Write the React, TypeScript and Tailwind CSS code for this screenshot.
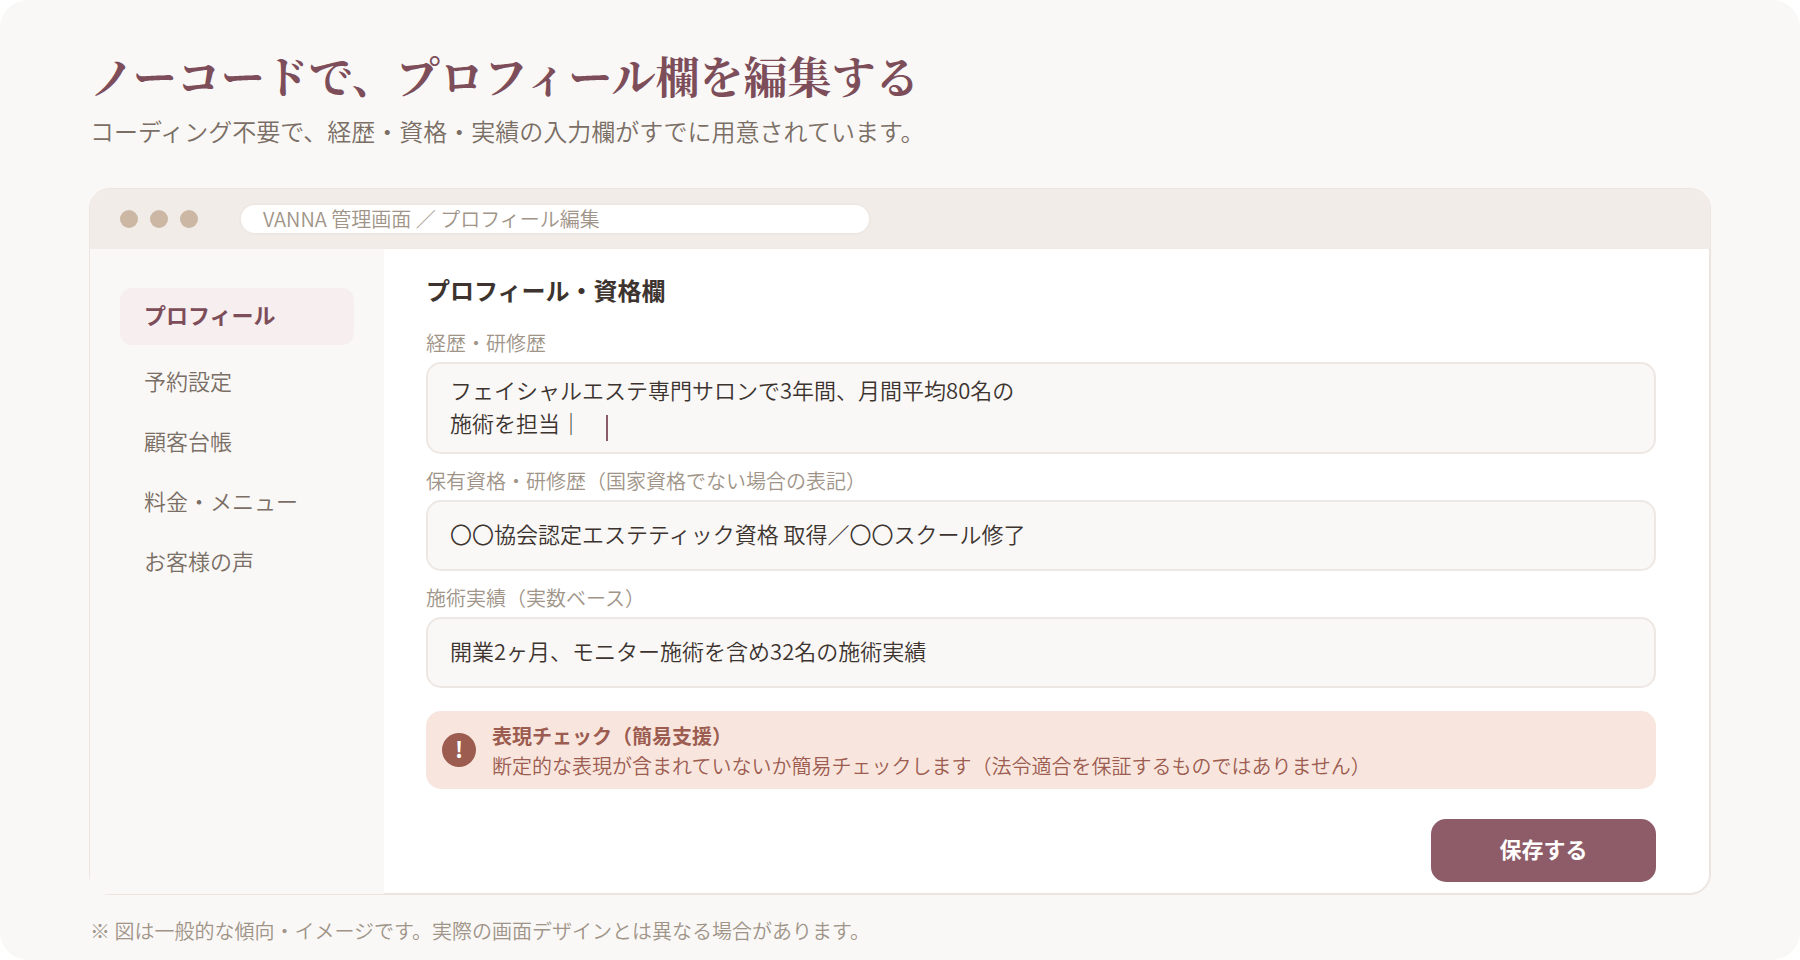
import React, { useState } from 'react';

const NAV_ITEMS = ['プロフィール', '予約設定', '顧客台帳', '料金・メニュー', 'お客様の声'];

const fieldClass =
  'block w-full resize-none rounded-[15px] border-2 border-[#eee8e4] bg-[#f9f8f6] px-[22px] text-[22px] text-[#3d3430] outline-none';

const labelClass = 'block text-[20px] leading-[30px] text-[#a09488]';

function TitleBar() {
  return (
    <div className="flex h-[60px] items-center rounded-t-[20px] bg-[#f2ece8] px-[30px]">
      <div className="flex gap-3">
        <span className="size-[18px] rounded-full bg-[#cbb7a4]" />
        <span className="size-[18px] rounded-full bg-[#cbb7a4]" />
        <span className="size-[18px] rounded-full bg-[#cbb7a4]" />
      </div>
      <div className="ml-[41px] flex h-8 w-[632px] items-center rounded-full border-2 border-[#eee8e4] bg-white px-[22px] text-[20px] text-[#a09488]">
        VANNA 管理画面 ／ プロフィール編集
      </div>
    </div>
  );
}

function Sidebar({ active, onSelect }: { active: string; onSelect: (item: string) => void }) {
  return (
    <nav className="w-[294px] shrink-0 bg-[#f9f8f6] px-[30px] pt-[39px]">
      {NAV_ITEMS.map((item) => (
        <button
          key={item}
          onClick={() => onSelect(item)}
          className={
            item === active
              ? 'mb-[6px] block h-[57px] w-full rounded-xl bg-[#f7eeef] px-6 pb-1 text-left text-[22px] font-bold text-[#7d4e5a]'
              : 'block h-[60px] w-full px-6 pb-0.5 text-left text-[22px] text-[#7a6e65]'
          }
        >
          {item}
        </button>
      ))}
    </nav>
  );
}

function ProfileForm() {
  return (
    <form
      className="min-w-0 flex-1 rounded-br-[20px] border-r border-b border-[#ece4df] bg-white pr-[53px] pb-[11px] pl-[42px]"
      onSubmit={(e) => e.preventDefault()}
    >
      <h2 className="pt-[23px] text-[24px] leading-9 font-bold text-[#3d3430]">プロフィール・資格欄</h2>

      <label htmlFor="career" className={`mt-5 ${labelClass}`}>経歴・研修歴</label>
      <div className="relative mt-1">
        <textarea
          id="career"
          rows={2}
          defaultValue={'フェイシャルエステ専門サロンで3年間、月間平均80名の\n施術を担当｜'}
          className={`h-[92px] py-[9px] leading-[33px] ${fieldClass}`}
        />
        {/* text cursor */}
        <span className="absolute top-[53px] left-[180px] h-[26px] w-[2px] bg-[#8e5c68]" />
      </div>

      <label htmlFor="license" className={`mt-3 ${labelClass}`}>保有資格・研修歴（国家資格でない場合の表記）</label>
      <input
        id="license"
        defaultValue="〇〇協会認定エステティック資格 取得／〇〇スクール修了"
        className={`mt-1 h-[71px] pb-1.5 ${fieldClass}`}
      />

      <label htmlFor="results" className={`mt-3 ${labelClass}`}>施術実績（実数ベース）</label>
      <input
        id="results"
        defaultValue="開業2ヶ月、モニター施術を含め32名の施術実績"
        className={`mt-1 h-[71px] pb-1.5 ${fieldClass}`}
      />

      <div className="mt-[23px] flex h-[78px] items-center gap-4 rounded-[15px] bg-[#f8e6de] px-4 text-[#9c5c50]">
        <span className="flex size-[34px] shrink-0 items-center justify-center rounded-full bg-[#9c5c50] pb-1 text-[22px] font-bold text-white">
          !
        </span>
        <div className="pt-0.5 text-[20px] leading-[30px]">
          <p className="font-bold">表現チェック（簡易支援）</p>
          <p>断定的な表現が含まれていないか簡易チェックします（法令適合を保証するものではありません）</p>
        </div>
      </div>

      <div className="mt-[30px] flex justify-end">
        <button type="submit" className="h-[63px] w-[225px] rounded-[15px] bg-[#8e5c68] pb-1 text-[22px] font-bold text-white">
          保存する
        </button>
      </div>
    </form>
  );
}

function App() {
  const [active, setActive] = useState(NAV_ITEMS[0]);

  return (
    <div className="min-h-screen rounded-[28px] bg-[#f9f8f6] px-[89px] pt-[45px] font-['Noto_Sans_CJK_JP',sans-serif] font-[350]">
      <header className="px-px">
        <h1 className="font-['Noto_Serif_CJK_JP','Noto_Sans_CJK_JP',serif] text-[44px] leading-[60px] font-bold text-[#7d4e5a]">
          ノーコードで、プロフィール欄を編集する
        </h1>
        <p className="mt-[6px] text-[24px] leading-10 text-[#7a6e65]">
          コーディング不要で、経歴・資格・実績の入力欄がすでに用意されています。
        </p>
      </header>

      <section className="mt-[37px] rounded-[21px] border border-[#ece4df]">
        <TitleBar />
        <div className="flex">
          <Sidebar active={active} onSelect={setActive} />
          <ProfileForm />
        </div>
      </section>

      <p className="mt-5 px-px text-[20px] leading-8 text-[#a09488]">
        ※ 図は一般的な傾向・イメージです。実際の画面デザインとは異なる場合があります。
      </p>
    </div>
  );
}

export default App;
